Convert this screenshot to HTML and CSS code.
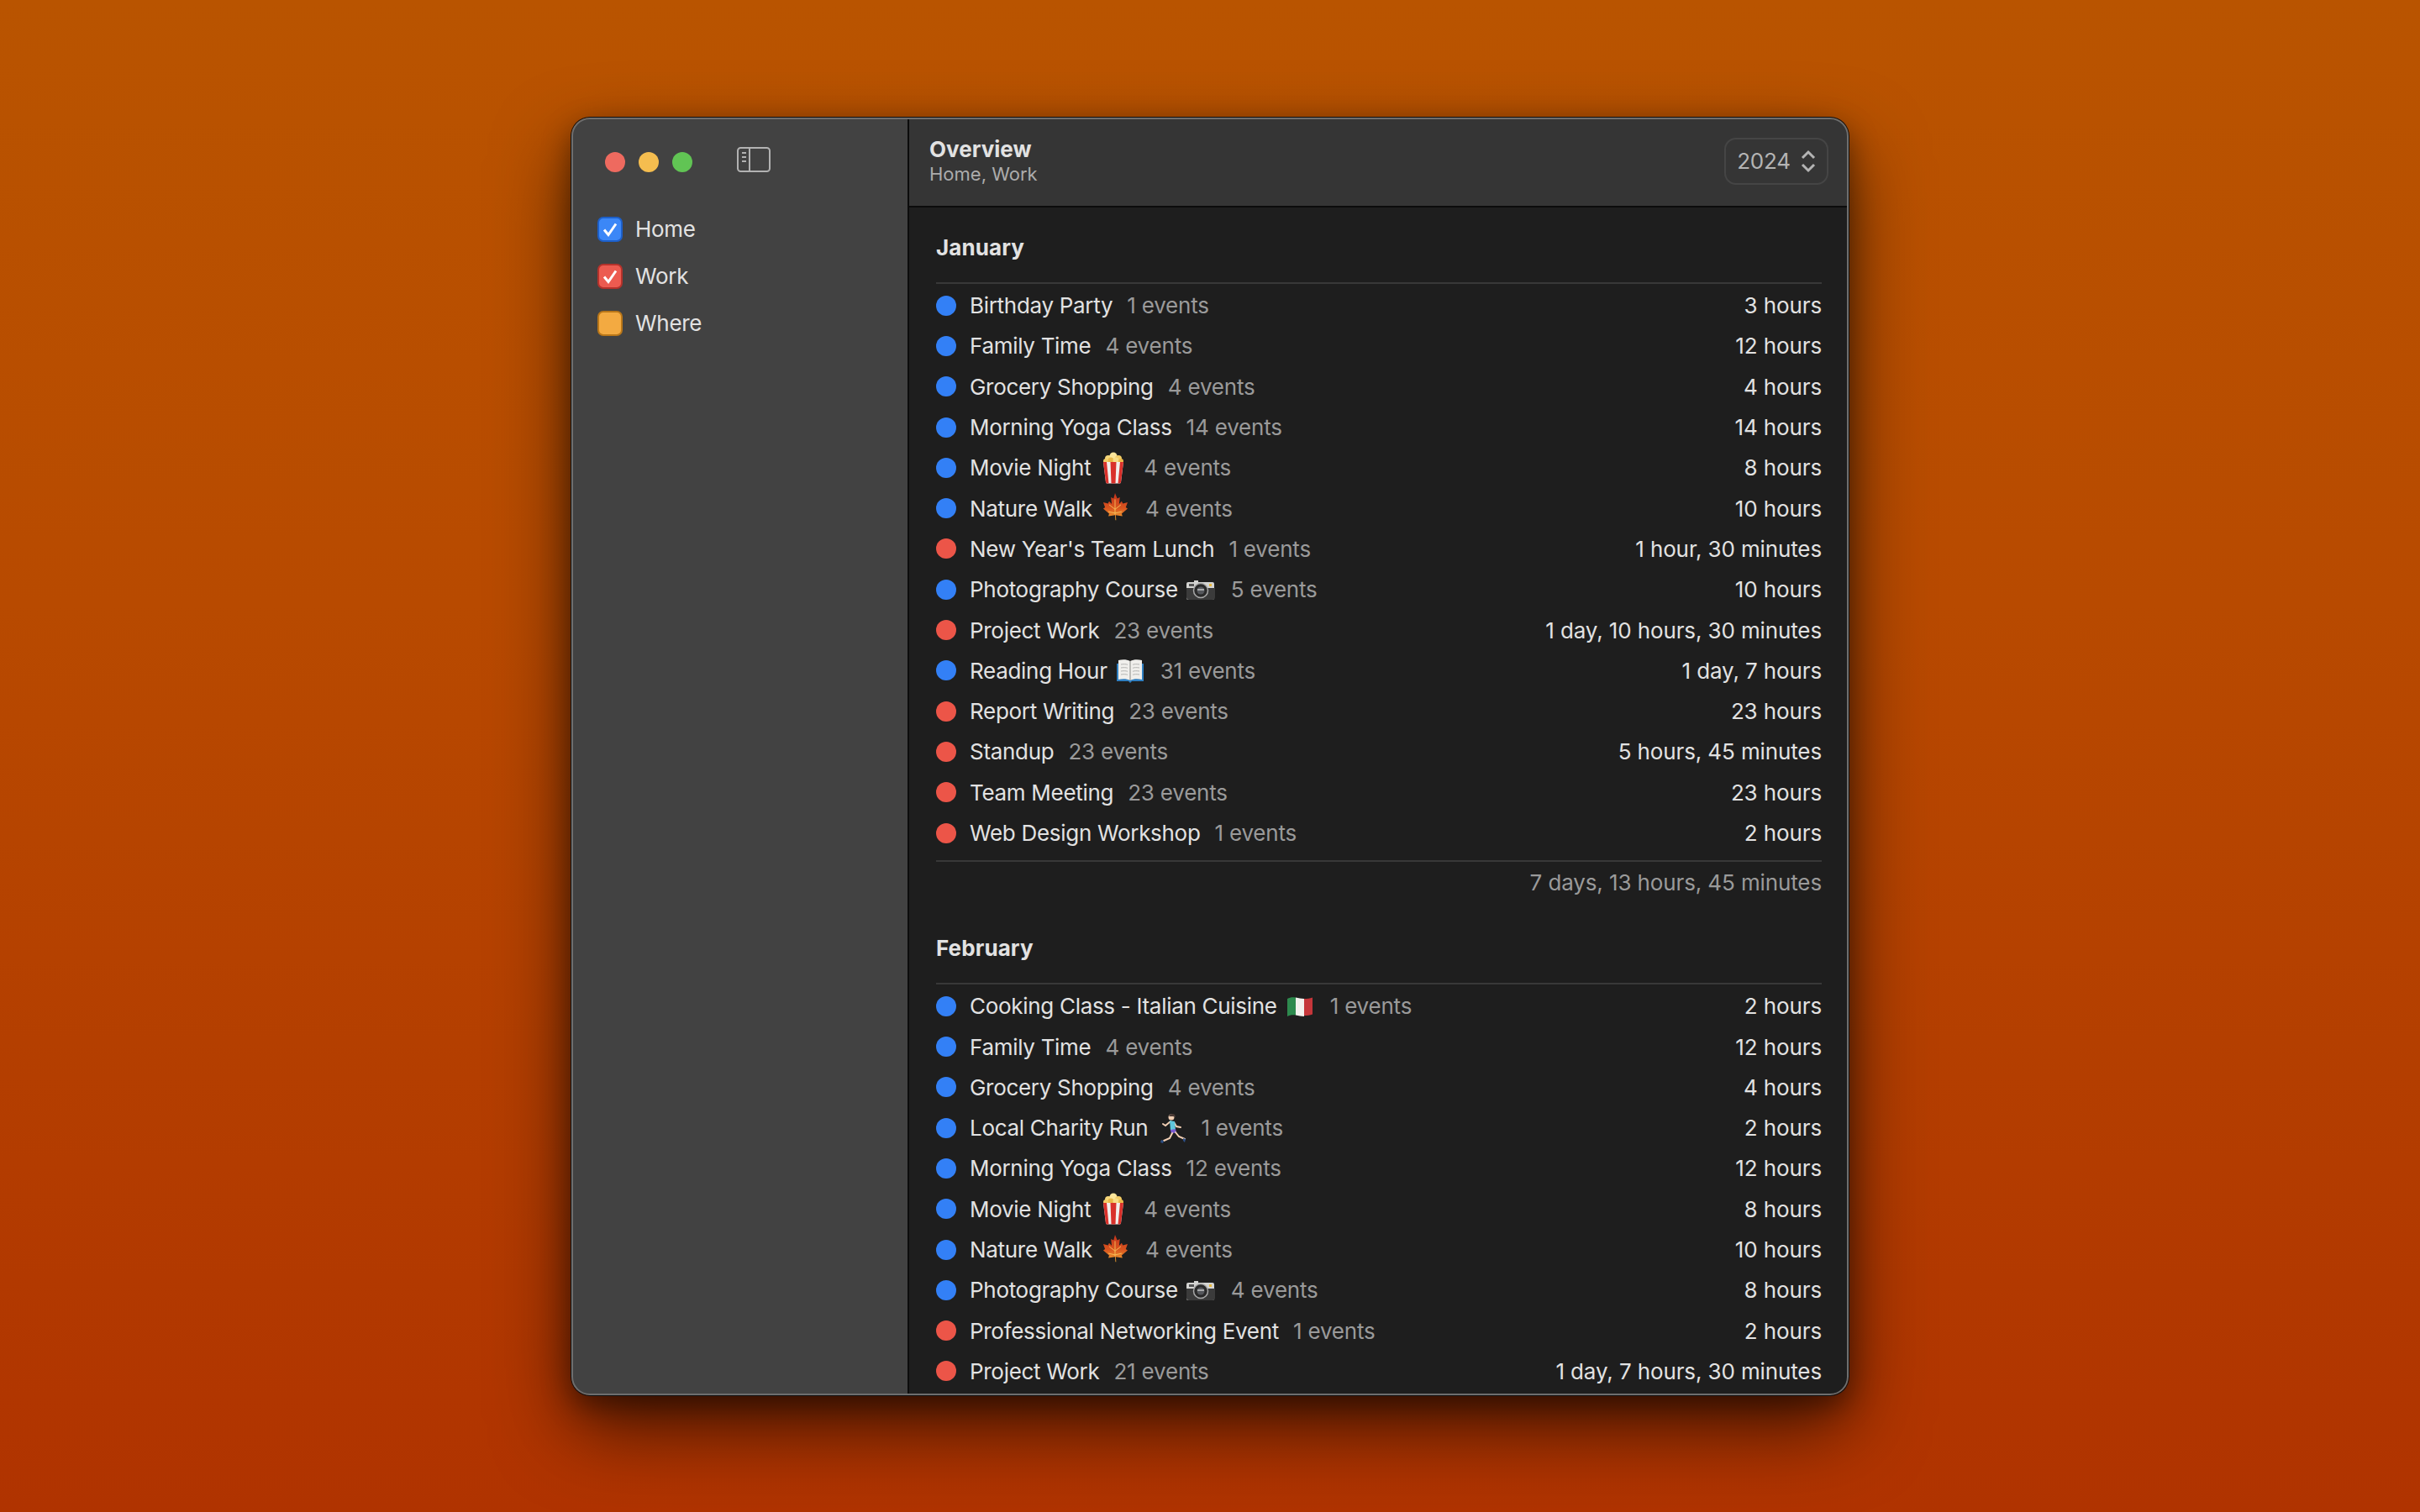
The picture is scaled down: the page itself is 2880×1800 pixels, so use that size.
FILE: index.html
```html
<!DOCTYPE html>
<html lang="en">

<head>
    <meta charset="UTF-8">
    <meta name="viewport" content="width=device-width, initial-scale=1.0">
    <title>Overview</title>
    <link rel="stylesheet" href="styles.css">
</head>

<body>
    <svg class="defs" aria-hidden="true">
        <defs>
            <linearGradient id="leaf-fill" x1="0" y1="0" x2="0" y2="1">
                <stop offset="0" stop-color="#c4321c"/>
                <stop offset="0.55" stop-color="#d9551f"/>
                <stop offset="1" stop-color="#f2a531"/>
            </linearGradient>
        </defs>
        <symbol id="popcorn" viewBox="0 0 38 38">
            <circle cx="13" cy="8" r="4" fill="#f6d77a"/>
            <circle cx="19" cy="5" r="4.500" fill="#fbe59a"/>
            <circle cx="25" cy="8" r="4" fill="#f3cd66"/>
            <circle cx="16" cy="10" r="3.500" fill="#e9b949"/>
            <circle cx="22" cy="10" r="3.500" fill="#f8dd86"/>
            <circle cx="10" cy="11" r="3" fill="#f3cd66"/>
            <circle cx="28" cy="11" r="3" fill="#e9b949"/>
            <path d="M7 12h24l-3 24a2 2 0 0 1-2 1.500H12a2 2 0 0 1-2-1.500z" fill="#f1efec"/>
            <path d="M7 12h4l2.500 25.500H12a2 2 0 0 1-2-1.500zM15.500 12h7l-1 25.500h-5zM27 12h4l-3 24a2 2 0 0 1-2 1.500h-1.500z" fill="#d9312b"/>
        </symbol>
        <symbol id="leaf" viewBox="0 0 38 38">
            <g transform="translate(19 1) scale(.88 .92) translate(-19 -1)">
                <path d="M19 1l3 7 3.500-1.500-1 8.500 3.500-3.500 1.500 3 6.500-1.500-2.500 6.500 2.500 1.500-8 6.500 1 3.500-9-1.500.5 6.500h-1l-.5-6.500-9 1.500 1-3.500-8-6.500 2.500-1.500-2.500-6.500 6.500 1.500 1.500-3 3.500 3.500-1-8.500 3.500 1.500z" fill="url(#leaf-fill)"/>
                <path d="M19 9v20M19 22l-8-6M19 22l8-6M19 27l-9-2M19 27l9-2" stroke="#f7c25a" stroke-width="1" fill="none"/>
            </g>
        </symbol>
        <symbol id="camera" viewBox="0 0 38 38">
            <path d="M4 10h7v-2h5v2h17a2 2 0 0 1 2 2v17a2 2 0 0 1-2 2H4a2 2 0 0 1-2-2V12a2 2 0 0 1 2-2z" fill="#d4d4d2"/>
            <path d="M2 17h34v11a3 3 0 0 1-3 3H5a3 3 0 0 1-3-3z" fill="#3b3b3b"/>
            <circle cx="19" cy="20" r="8.500" fill="#2a2a2a" stroke="#a8a8a8" stroke-width="1.500"/>
            <circle cx="19" cy="20" r="4.500" fill="#55575c"/>
            <path d="M15 19h8" stroke="#c4c4c4" stroke-width="1.500"/>
            <rect x="29" y="12" width="3" height="3" fill="#e8b83c"/>
            <rect x="5" y="12" width="6" height="3" fill="#555"/>
        </symbol>
        <symbol id="book" viewBox="0 0 38 38">
            <path d="M3 11h32v21H21l-2 2-2-2H3z" fill="#2f7fc1"/>
            <path d="M5 7c5-1 10-1 14 1 4-2 9-2 14-1v23c-5-1-10-1-14 1-4-2-9-2-14-1z" fill="#f0efec"/>
            <path d="M19 8v23" stroke="#9a9a98" stroke-width="1.200"/>
            <path d="M8 12c3-.5 6-.5 8 .300M8 16c3-.5 6-.5 8 .300M8 20c3-.5 6-.5 8 .300M8 24c3-.5 6-.5 8 .300M22 12.300c2-.8 5-.8 8-.300M22 16.300c2-.8 5-.8 8-.300M22 20.300c2-.8 5-.8 8-.300M22 24.300c2-.8 5-.8 8-.300" stroke="#b4b4b2" stroke-width="1" fill="none"/>
        </symbol>
        <symbol id="flag" viewBox="0 0 38 38">
            <path d="M4 10c3-2 7-2 10-1.500v21c-3-.5-7-.5-10 1.500z" fill="#2d8a4e"/>
            <path d="M14 8.500c3.500.5 6.500 1.500 10 1.500v21c-3.500 0-6.500-1-10-1.500z" fill="#f2f1ee"/>
            <path d="M24 10c3.500 0 7-.5 10-1.500v20c-3 1-6.500 1.500-10 1.500z" fill="#c5363a"/>
        </symbol>
        <symbol id="runner" viewBox="0 0 38 38">
            <circle cx="20" cy="6" r="3.500" fill="#f1cfb4"/>
            <path d="M17 5c1-3 5-4 7-2l1 3-3-1z" fill="#4a3a35"/>
            <path d="M19 11l-6 5-3-2" stroke="#f1cfb4" stroke-width="2" fill="none" stroke-linecap="round"/>
            <path d="M23 12l3 5 5 1" stroke="#f1cfb4" stroke-width="2" fill="none" stroke-linecap="round"/>
            <path d="M18 10l6 1 1 10-6 1z" fill="#5fc6dc"/>
            <path d="M19 21l6-1 1 4-6 2z" fill="#7b5bd0"/>
            <path d="M21 25l-3 6-7 3" stroke="#f1cfb4" stroke-width="2" fill="none" stroke-linecap="round"/>
            <path d="M25 24l4 5 7 3" stroke="#f1cfb4" stroke-width="2" fill="none" stroke-linecap="round"/>
            <path d="M8 33l3 1-1 3-3-1zM34 31l3 1-1 4-2-2z" fill="#2c4f86"/>
        </symbol>
    </svg>

    <div class="window">
        <aside class="sidebar">
            <div class="titlebar">
                <div class="lights">
                    <span class="light red"></span>
                    <span class="light yellow"></span>
                    <span class="light green"></span>
                </div>
                <svg class="sidebar-icon" viewBox="0 0 40 30" fill="none">
                    <rect x="1" y="1" width="38" height="28" rx="3.500" stroke="#b2b2b2" stroke-width="2"/>
                    <path d="M15 1v28" stroke="#b2b2b2" stroke-width="2"/>
                    <path d="M6 7h5M6 12h5M6 17h5" stroke="#b2b2b2" stroke-width="2"/>
                </svg>
            </div>
            <ul class="calendars">
                <li><span class="check blue"><svg viewBox="0 0 30 30" fill="none"><path d="M8 15.500l5 6 9-13" stroke="#fff" stroke-width="3"/></svg></span>Home</li>
                <li><span class="check coral"><svg viewBox="0 0 30 30" fill="none"><path d="M8 15.500l5 6 9-13" stroke="#fff" stroke-width="3"/></svg></span>Work</li>
                <li><span class="check amber"></span>Where</li>
            </ul>
        </aside>

        <main class="content">
            <header class="header">
                <div>
                    <div class="title">Overview</div>
                    <div class="subtitle">Home, Work</div>
                </div>
                <div class="year-select">
                    <span class="year">2024</span>
                    <svg class="chevrons" viewBox="0 0 18 28" fill="none">
                        <path d="M2 10l7-7 7 7M2 18l7 7 7-7" stroke="#b4b4b4" stroke-width="3"/>
                    </svg>
                </div>
            </header>

            <div class="scroll">
                <section class="month">
                    <h2>January</h2>
                    <div class="rows">
                        <div class="row"><span class="dot home"></span><span class="name">Birthday Party</span><span class="count">1 events</span><span class="total">3 hours</span></div>
                        <div class="row"><span class="dot home"></span><span class="name">Family Time</span><span class="count">4 events</span><span class="total">12 hours</span></div>
                        <div class="row"><span class="dot home"></span><span class="name">Grocery Shopping</span><span class="count">4 events</span><span class="total">4 hours</span></div>
                        <div class="row"><span class="dot home"></span><span class="name">Morning Yoga Class</span><span class="count">14 events</span><span class="total">14 hours</span></div>
                        <div class="row"><span class="dot home"></span><span class="name">Movie Night<svg class="emoji"><use href="#popcorn"/></svg></span><span class="count">4 events</span><span class="total">8 hours</span></div>
                        <div class="row"><span class="dot home"></span><span class="name">Nature Walk<svg class="emoji"><use href="#leaf"/></svg></span><span class="count">4 events</span><span class="total">10 hours</span></div>
                        <div class="row"><span class="dot work"></span><span class="name">New Year's Team Lunch</span><span class="count">1 events</span><span class="total">1 hour, 30 minutes</span></div>
                        <div class="row"><span class="dot home"></span><span class="name">Photography Course<svg class="emoji"><use href="#camera"/></svg></span><span class="count">5 events</span><span class="total">10 hours</span></div>
                        <div class="row"><span class="dot work"></span><span class="name">Project Work</span><span class="count">23 events</span><span class="total">1 day, 10 hours, 30 minutes</span></div>
                        <div class="row"><span class="dot home"></span><span class="name">Reading Hour<svg class="emoji"><use href="#book"/></svg></span><span class="count">31 events</span><span class="total">1 day, 7 hours</span></div>
                        <div class="row"><span class="dot work"></span><span class="name">Report Writing</span><span class="count">23 events</span><span class="total">23 hours</span></div>
                        <div class="row"><span class="dot work"></span><span class="name">Standup</span><span class="count">23 events</span><span class="total">5 hours, 45 minutes</span></div>
                        <div class="row"><span class="dot work"></span><span class="name">Team Meeting</span><span class="count">23 events</span><span class="total">23 hours</span></div>
                        <div class="row"><span class="dot work"></span><span class="name">Web Design Workshop</span><span class="count">1 events</span><span class="total">2 hours</span></div>
                    </div>
                    <div class="sum">7 days, 13 hours, 45 minutes</div>
                </section>

                <section class="month">
                    <h2>February</h2>
                    <div class="rows">
                        <div class="row"><span class="dot home"></span><span class="name">Cooking Class - Italian Cuisine<svg class="emoji"><use href="#flag"/></svg></span><span class="count">1 events</span><span class="total">2 hours</span></div>
                        <div class="row"><span class="dot home"></span><span class="name">Family Time</span><span class="count">4 events</span><span class="total">12 hours</span></div>
                        <div class="row"><span class="dot home"></span><span class="name">Grocery Shopping</span><span class="count">4 events</span><span class="total">4 hours</span></div>
                        <div class="row"><span class="dot home"></span><span class="name">Local Charity Run<svg class="emoji"><use href="#runner"/></svg></span><span class="count">1 events</span><span class="total">2 hours</span></div>
                        <div class="row"><span class="dot home"></span><span class="name">Morning Yoga Class</span><span class="count">12 events</span><span class="total">12 hours</span></div>
                        <div class="row"><span class="dot home"></span><span class="name">Movie Night<svg class="emoji"><use href="#popcorn"/></svg></span><span class="count">4 events</span><span class="total">8 hours</span></div>
                        <div class="row"><span class="dot home"></span><span class="name">Nature Walk<svg class="emoji"><use href="#leaf"/></svg></span><span class="count">4 events</span><span class="total">10 hours</span></div>
                        <div class="row"><span class="dot home"></span><span class="name">Photography Course<svg class="emoji"><use href="#camera"/></svg></span><span class="count">4 events</span><span class="total">8 hours</span></div>
                        <div class="row"><span class="dot work"></span><span class="name">Professional Networking Event</span><span class="count">1 events</span><span class="total">2 hours</span></div>
                        <div class="row"><span class="dot work"></span><span class="name">Project Work</span><span class="count">21 events</span><span class="total">1 day, 7 hours, 30 minutes</span></div>
                    </div>
                </section>
            </div>
        </main>
    </div>
</body>

</html>
```

FILE: styles.css
```css
* {
    box-sizing: border-box;
}

body {
    margin: 0;
    height: 100vh;
    overflow: hidden;
    display: flex;
    align-items: center;
    justify-content: center;
    font-family: Inter, "Liberation Sans", sans-serif;
    font-size: 26px;
    color: #e2e2e2;
    background: linear-gradient(180deg, #b95400 0%, #b84a00 40%, #b03300 100%);
}

.defs {
    width: 0;
    height: 0;
    position: absolute;
}

.window {
    width: 1520px;
    height: 1521px;
    display: flex;
    border-radius: 22px;
    overflow: hidden;
    box-shadow: 0 0 0 1px #111, 0 40px 90px rgba(0, 0, 0, 0.62), 0 12px 34px rgba(0, 0, 0, 0.4);
    position: relative;
}

/* thin light rim on top of the panels */
.window::after {
    content: "";
    position: absolute;
    inset: 0;
    border: 2px solid #6e6e6e;
    border-radius: 22px;
    pointer-events: none;
}

.sidebar {
    width: 402px;
    flex-shrink: 0;
    background-color: #424242;
    border-right: 2px solid #0c0c0c;
}

.titlebar {
    height: 105px;
    padding: 36px 0 0 40px;
    display: flex;
    align-items: flex-start;
}

.lights {
    display: flex;
    gap: 16px;
    margin-top: 5px;
}

.light {
    width: 24px;
    height: 24px;
    border-radius: 50%;
}

.light.red {
    background-color: #ee6a5f;
}

.light.yellow {
    background-color: #f5bd4f;
}

.light.green {
    background-color: #61c454;
}

.sidebar-icon {
    width: 40px;
    height: 30px;
    margin-left: 53px;
    margin-top: -1px;
}

.calendars {
    list-style: none;
    margin: 0;
    padding: 13px 0 0 31px;
    display: flex;
    flex-direction: column;
    gap: 26px;
    letter-spacing: -0.3px;
}

.calendars li {
    display: flex;
    align-items: center;
    gap: 15px;
    height: 30px;
}

.check {
    width: 30px;
    height: 30px;
    border-radius: 7px;
    border: 2px solid;
}

.check svg {
    display: block;
    width: 30px;
    height: 30px;
    margin: -2px;
}

.check.blue {
    background-color: #3b87f7;
    border-color: #1d5fc9;
}

.check.coral {
    background-color: #ec5b50;
    border-color: #b4322b;
}

.check.amber {
    background-color: #f3aa41;
    border-color: #b97618;
}

.content {
    flex: 1;
    min-width: 0;
    display: flex;
    flex-direction: column;
    background-color: #1e1e1e;
}

.header {
    height: 107px;
    flex-shrink: 0;
    padding: 0 24px;
    display: flex;
    align-items: center;
    justify-content: space-between;
    background-color: #353535;
    border-bottom: 2px solid #0c0c0c;
}

.title {
    font-weight: 700;
    line-height: 30px;
}

.subtitle {
    font-size: 22px;
    line-height: 29px;
    color: #acacac;
}

.year-select {
    width: 124px;
    height: 56px;
    display: flex;
    align-items: center;
    justify-content: center;
    gap: 12px;
    border: 2px solid #454545;
    border-radius: 14px;
    color: #b4b4b4;
    letter-spacing: -0.2px;
}

.year {
    margin-top: -2px;
}

.chevrons {
    width: 18px;
    height: 28px;
}

.scroll {
    flex: 1;
    min-height: 0;
    overflow: hidden;
    padding: 0 32px;
}

.month h2 {
    margin: 0;
    height: 91px;
    padding-top: 30px;
    font-size: 26px;
    line-height: 36px;
    font-weight: 700;
    letter-spacing: 0.1px;
    border-bottom: 2px solid #383838;
}

.rows {
    padding-top: 2px;
}

.row {
    height: 48.3px;
    display: flex;
    align-items: center;
}

.dot {
    width: 24px;
    height: 24px;
    border-radius: 50%;
    margin-right: 16px;
    flex-shrink: 0;
}

.dot.home {
    background-color: #3380f6;
}

.dot.work {
    background-color: #ec5548;
}

.name {
    display: flex;
    align-items: center;
    letter-spacing: -0.3px;
}

.emoji {
    width: 38px;
    height: 38px;
    margin-left: 8px;
}

.count {
    margin-left: 17px;
    color: #9a9a9a;
    letter-spacing: -0.2px;
}

.total {
    margin-left: auto;
    letter-spacing: -0.12px;
}

.sum {
    margin-top: 8px;
    margin-bottom: 5px;
    height: 52px;
    border-top: 2px solid #383838;
    display: flex;
    align-items: center;
    justify-content: flex-end;
    color: #9a9a9a;
    letter-spacing: -0.12px;
}
```
